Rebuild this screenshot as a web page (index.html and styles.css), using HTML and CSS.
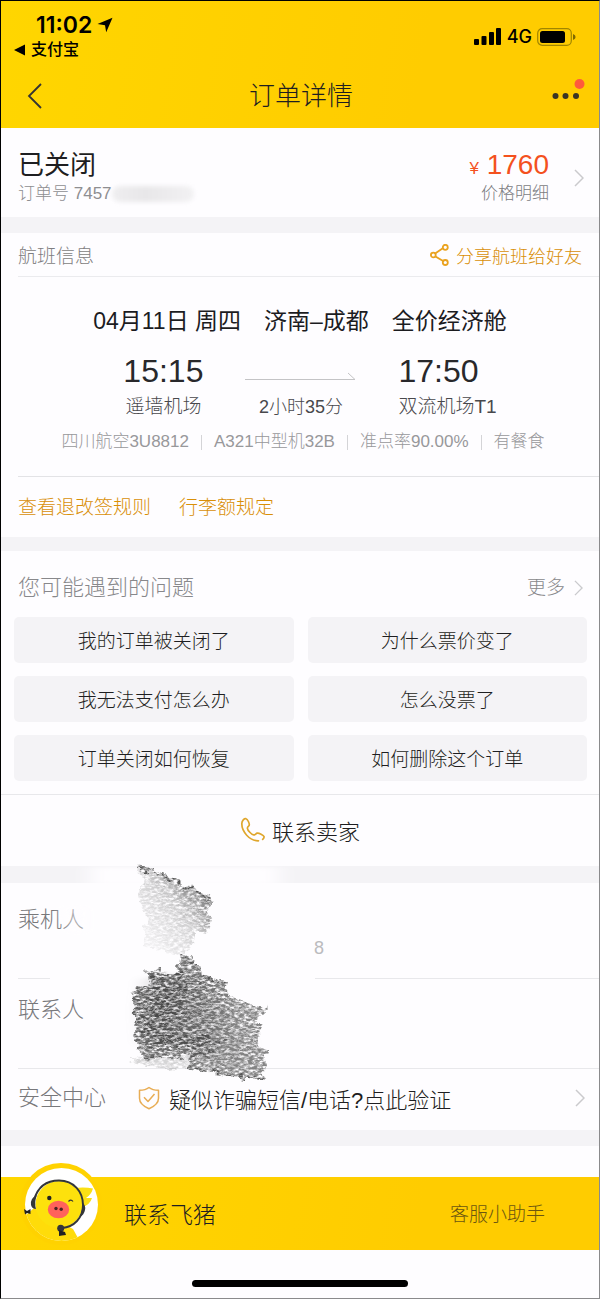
FILE: index.html
```html
<!DOCTYPE html>
<html lang="zh-CN">
<head>
<meta charset="utf-8">
<meta name="viewport" content="width=device-width, initial-scale=1">
<title>订单详情</title>
<link rel="stylesheet" href="styles.css">
</head>
<body>
<div class="screen">
  <header class="header">
    <div class="status">
      <div class="status-left">
        <div class="clock">11:02
          <svg width="16" height="16" viewBox="0 0 16 16" aria-hidden="true"><path d="M15.500 .8 9.200 15.200 8 8.200 .5 6.900Z" fill="#000"/></svg>
        </div>
        <a class="return" href="#">
          <svg width="11" height="12" viewBox="0 0 11 12" aria-hidden="true"><path d="M0 6 11 .5v11Z" fill="#000"/></svg>
          支付宝
        </a>
      </div>
      <div class="status-right">
        <svg width="28" height="18" viewBox="0 0 28 18" aria-hidden="true"><rect x="0" y="11" width="5" height="6" rx="1"/><rect x="7.500" y="8" width="5" height="9" rx="1"/><rect x="15" y="4" width="5" height="13" rx="1"/><rect x="22" y="0" width="5" height="17" rx="1"/></svg>
        <span>4G</span>
        <svg width="39" height="18" viewBox="0 0 39 18" aria-hidden="true"><rect x=".7" y=".7" width="33.600" height="16.600" rx="4.500" fill="none" stroke="#a08500" stroke-width="1.200"/><rect x="3" y="3" width="25" height="12" rx="2.500"/><path d="M36 6q2.600 1 2.600 3t-2.600 3Z" fill="#806a00"/></svg>
      </div>
    </div>
    <nav class="nav">
      <button class="icon-btn" aria-label="返回"><svg width="16" height="26" viewBox="0 0 16 26"><path d="M14 1 2 13l12 12" fill="none" stroke="#333" stroke-width="1.800"/></svg></button>
      <h1>订单详情</h1>
      <button class="icon-btn more-btn" aria-label="更多操作"><svg width="34" height="26" viewBox="0 0 34 26"><circle cx="4.500" cy="18" r="3" fill="#3a3524"/><circle cx="14.500" cy="18" r="3" fill="#3a3524"/><circle cx="25" cy="18" r="3" fill="#3a3524"/><circle cx="28.500" cy="6" r="5" fill="#ff5a3c"/></svg></button>
    </nav>
  </header>

  <main>
    <section class="order">
      <div>
        <h2>已关闭</h2>
        <p class="order-no">订单号 7457<span class="masked"></span></p>
      </div>
      <a class="price" href="#">
        <span class="price-text"><span class="amount"><small>¥</small> 1760</span><span class="price-label">价格明细</span></span>
        <svg class="chevron" width="10" height="18" viewBox="0 0 10 18" aria-hidden="true"><path d="m1 1 8 8-8 8"/></svg>
      </a>
    </section>

    <section class="card flight">
      <div class="flight-head">
        <h3>航班信息</h3>
        <a href="#" class="share">
          <svg width="20" height="22" viewBox="0 0 20 22" fill="none" stroke="#eaa320" stroke-width="1.800" aria-hidden="true"><path d="M12.800 4.200 5.500 9.200M5.500 12.500l7.600 4.600"/><circle cx="15.300" cy="3.300" r="2.500"/><circle cx="3.300" cy="11" r="2.400"/><circle cx="15.300" cy="18.500" r="2.500"/></svg>
          分享航班给好友
        </a>
      </div>
      <div class="flight-body">
        <div class="route"><span>04月11日 周四</span><span>济南–成都</span><span>全价经济舱</span></div>
        <div class="legs">
          <div class="leg"><time>15:15</time><span>遥墙机场</span></div>
          <div class="leg duration">
            <svg viewBox="0 0 111 36" width="111" height="36" fill="none" stroke="#c4c4c6" aria-hidden="true"><path d="M0 26.500h110L103 20"/></svg>
            <span>2小时35分</span>
          </div>
          <div class="leg arrive"><time>17:50</time><span>双流机场T1</span></div>
        </div>
        <ul class="facts"><li>四川航空3U8812</li><li>A321中型机32B</li><li>准点率90.00%</li><li>有餐食</li></ul>
      </div>
      <div class="rules"><a href="#">查看退改签规则</a><a href="#">行李额规定</a></div>
    </section>

    <section class="card questions">
      <div class="faq-head">
        <h3>您可能遇到的问题</h3>
        <a href="#">更多 <svg class="chevron" width="9" height="16" viewBox="0 0 10 18" aria-hidden="true"><path d="m1 1 8 8-8 8"/></svg></a>
      </div>
      <div class="faq">
        <button>我的订单被关闭了</button><button>为什么票价变了</button>
        <button>我无法支付怎么办</button><button>怎么没票了</button>
        <button>订单关闭如何恢复</button><button>如何删除这个订单</button>
      </div>
      <button class="seller">
        <svg width="26" height="26" viewBox="0 0 26 26" fill="none" stroke="#dfa62c" stroke-width="1.700" stroke-linecap="round" stroke-linejoin="round" aria-hidden="true"><path d="M18.500 23.800C9.500 24 1.600 14.500 1.800 6.500 1.900 3.500 4.200 1.400 6 1.700 7.600 2.100 9.700 6.600 9.200 8.200 8.800 9.500 7.300 9.700 7.400 11.300 7.600 13.400 11.500 17.500 13.600 17.900 15.200 18.100 15.800 16.500 17.200 16.200 18.900 15.900 23.500 18.100 24 19.600 24.300 20.500 23.600 21.600 22.700 22.400"/></svg>
        联系卖家
      </button>
    </section>

    <section class="card people">
      <div class="person passenger"><span class="label">乘机人</span><span class="id-tail">8</span></div>
      <div class="person"><span class="label">联系人</span></div>
      <a class="safety" href="#">
        <span class="label">安全中心</span>
        <svg width="22" height="24" viewBox="0 0 22 24" fill="none" stroke="#e8ad55" stroke-width="1.500" stroke-linejoin="round" aria-hidden="true"><path d="M11 1.500C8.500 3.500 5 4.200 1.500 4.200v8c0 5 4.500 8.300 9.500 10.500 5-2.200 9.500-5.500 9.500-10.500v-8C17 4.200 13.500 3.500 11 1.500Z"/><path d="m6 11.200 4 4.200 6.500-7.500"/></svg>
        <span class="tip">疑似诈骗短信/电话?点此验证</span>
        <svg class="chevron" width="10" height="18" viewBox="0 0 10 18" aria-hidden="true"><path d="m1 1 8 8-8 8"/></svg>
      </a>
      <svg class="scribble" width="290" height="226" viewBox="50 860 290 226" aria-hidden="true">
        <defs>
          <filter id="soft" x="-30%" y="-50%" width="160%" height="200%"><feGaussianBlur stdDeviation="9 2"/></filter>
          <filter id="pencil" x="-5%" y="-5%" width="110%" height="110%">
            <feTurbulence type="fractalNoise" baseFrequency=".09 .13" numOctaves="3" seed="3" result="wave"/>
            <feDisplacementMap in="SourceGraphic" in2="wave" scale="12" xChannelSelector="R" yChannelSelector="G" result="shape"/>
            <feTurbulence type="fractalNoise" baseFrequency=".213 .437" numOctaves="4" seed="21"/>
            <feColorMatrix values="0 0 0 0 0  0 0 0 0 0  0 0 0 0 0  2.200 1.600 0 0 -1.250" result="grain"/>
            <feComposite in="shape" in2="grain" operator="in" result="marks"/>
            <feGaussianBlur in="marks" stdDeviation=".45"/>
          </filter>
          <linearGradient id="fade" x1="145" y1="935" x2="200" y2="885" gradientUnits="userSpaceOnUse"><stop offset="0" stop-color="#999" stop-opacity=".15"/><stop offset=".55" stop-color="#888" stop-opacity=".4"/><stop offset="1" stop-color="#555" stop-opacity=".85"/></linearGradient>
          <radialGradient id="dark" cx="163" cy="1010" r="75" gradientUnits="userSpaceOnUse"><stop offset="0" stop-color="#4a4a4a"/><stop offset=".5" stop-color="#606060" stop-opacity=".95"/><stop offset="1" stop-color="#707070" stop-opacity=".85"/></radialGradient>
        </defs>
        <path d="M90 866h190v18H90Z" fill="#fefdff" filter="url(#soft)"/>
        <path d="M62 905h25v28H70Z" fill="#fefdff" opacity=".5" filter="url(#soft)"/>
        <path d="M50 974h265v8H50Z" fill="#fefdff"/>
        <path d="M146 978 180 972 200 984 225 1010 245 1040 245 1066 205 1060 200 1046 145 1044 142 1010Z" fill="#777" opacity=".2" filter="url(#soft)"/>
        <g filter="url(#pencil)">
          <path d="M139 865 213 896 207 908 211 916 208 932 193 930 192 944 180 955 143 945 148 915 136 896 144 880Z" fill="url(#fade)"/>
          <path d="M140 866 212 897" stroke="#555" stroke-width="3"/>
          <path d="M180 952 186 953 212 977 228 980 226 992 240 999 268 1007 257 1018 264 1022 256 1045 266 1052 265 1079 188 1068 190 1051 143 1057 134 1038 135 1010 130 992 150 984 143 968 177 972Z" fill="url(#dark)"/>
          <path d="M148 980 185 972 153 990 196 985 151 1000 173 1000 150 1014 180 1013 140 1030 175 1032 150 1043 210 1035 176 1046 230 1040" fill="none" stroke="#444" stroke-width="5" opacity=".7"/>
          <path d="M181 953 212 979M145 1057 215 1050M188 1067 265 1078M155 980 228 980" fill="none" stroke="#555" stroke-width="3"/>
          <path d="M130 1060 190 1050 187 1068 145 1066Z" fill="#999" opacity=".4"/>
        </g>
      </svg>
    </section>
  </main>

  <footer class="footer">
    <a class="assistant" href="#">
      <svg class="avatar" width="82" height="82" viewBox="0 0 82 82" aria-hidden="true">
        <defs><clipPath id="disc"><circle cx="41.500" cy="41.500" r="36.500"/></clipPath></defs>
        <circle cx="41" cy="41" r="41" fill="#ffd200"/>
        <circle cx="41.500" cy="41.500" r="36.500" fill="#fff"/>
        <g clip-path="url(#disc)">
          <path d="M55 25Q65 24 73 25.500 71 32 66 35h6Q70 42 62 44Z" fill="#fbe014"/>
          <path d="M14 45 5 53V82H60L58 75 53 66Z" fill="#ffdc0a"/>
          <circle cx="39" cy="41.500" r="23.500" fill="#fde10c"/>
        </g>
        <path d="M14 37C18 23 28 17.500 39 17.500 54 17.500 63 29 63 42 63 55 54 64 42 65" fill="none" stroke="#33363a" stroke-width="1.900"/>
        <path d="M17 32Q10 35 11 42 12 46 16 46Q14 39 17 32ZM62 39Q66 42 65 47 64 52 60 54Q63 46 62 39Z" fill="#33363a"/>
        <ellipse cx="38.500" cy="46.500" rx="10.700" ry="8.700" fill="#ff625b"/>
        <circle cx="36" cy="45.500" r="1.700" fill="#4a2322"/><circle cx="41.200" cy="46.300" r="1.700" fill="#4a2322"/>
        <circle cx="29.300" cy="35" r="2.200" fill="#222"/>
        <path d="M48.500 38.500q2.500-2.600 4.500 0" fill="none" stroke="#333" stroke-width="1.200"/>
        <circle cx="40.700" cy="65.300" r="3.500" fill="#33363a"/>
        <path d="M4 46l3 2 3.500-2v5l-3.500-1-2 1.500ZM39 67l6 2 1 3-4 .5-3 .5Z" fill="#222"/>
      </svg>
      <span class="assistant-name">联系飞猪</span>
      <span class="assistant-role">客服小助手</span>
    </a>
    <div class="home"><span></span></div>
  </footer>
</div>
</body>
</html>
```
FILE: styles.css
```css
* { box-sizing: border-box; }
body, h1, h2, h3, p, ul { margin: 0; padding: 0; }
body {
  font-family: "Liberation Sans", "Noto Sans CJK SC", sans-serif;
  font-weight: 300;
  color: #1e1e21;
  background: #fefdff;
}
h1, h2, h3 { font-weight: 300; }
a { color: inherit; text-decoration: none; }
button { font: inherit; color: inherit; border: 0; padding: 0; background: none; }
svg { display: block; flex: none; }

.screen {
  border: 1px solid #8a8a8c;
  border-top-color: #000;
  border-left-color: #000;
}
.chevron { fill: none; stroke: #cacacd; stroke-width: 1.5; }

.header { background: linear-gradient(100deg, #ffd600, #ffcc00 70%); }
.status {
  display: flex;
  justify-content: space-between;
  padding: 11px 23px 0 13px;
  color: #000;
}
.clock {
  display: flex;
  align-items: center;
  gap: 5px;
  padding-left: 22px;
  font: 600 23px/26px Inter, sans-serif;
}
.return {
  display: flex;
  align-items: center;
  gap: 6px;
  font-size: 16px;
  font-weight: 500;
  line-height: 24px;
}
.status-right {
  display: flex;
  align-items: center;
  gap: 5px;
  font: 500 18px/24px Inter, sans-serif;
}
.nav {
  display: grid;
  grid-template-columns: 1fr auto 1fr;
  align-items: center;
  height: 66px;
  padding: 2px 14px 0 26px;
}
.nav h1 { font-size: 26px; line-height: 36px; padding-right: 10px; }
.icon-btn { justify-self: start; }
.more-btn { justify-self: end; padding-bottom: 10px; }

.order {
  display: flex;
  justify-content: space-between;
  padding: 21px 15px 11px 17px;
}
.order h2 { font-size: 26px; font-weight: 400; line-height: 32px; }
.order-no { display: flex; align-items: center; font-size: 17px; line-height: 25px; color: #8e8e91; }
.masked {
  width: 82px;
  height: 16px;
  border-radius: 8px;
  background: linear-gradient(90deg, #efeef0, #e8e7e9 40%, #f2f1f3);
  filter: blur(2px);
}
.price { display: flex; align-items: center; gap: 25px; }
.price-text { display: grid; justify-items: end; }
.amount { font-size: 28px; line-height: 32px; color: #f4511e; }
.amount small { font-size: 17px; line-height: 1; }
.price-label { font-size: 17px; line-height: 25px; color: #7c7c7f; }

.card { position: relative; border-top: 16px solid #f4f3f6; }
.questions { border-top-width: 14px; }
.people { border-top-width: 17px; }

.flight-head {
  display: flex;
  justify-content: space-between;
  align-items: center;
  height: 44px;
  margin-left: 17px;
  padding-right: 17px;
  border-bottom: 1px solid #ebebee;
}
.flight-head h3 { font-size: 19px; color: #7e7e81; }
.share { display: flex; align-items: center; gap: 6px; font-size: 18px; color: #d98f08; }
.flight-body {
  display: grid;
  justify-content: center;
  margin-left: 17px;
  padding: 28px 17px 22px 0;
  border-bottom: 1px solid #e3e3e6;
}
.route {
  display: flex;
  justify-content: center;
  gap: 23px;
  font-size: 23px;
  font-weight: 400;
  line-height: 32px;
  color: #1c1c1f;
}
.legs {
  display: flex;
  justify-content: center;
  gap: 42px;
  padding: 16px 0 11px 20px;
}
.leg { display: grid; gap: 6px; justify-items: center; font-size: 19px; line-height: 24px; color: #48484c; }
.leg time { font-size: 32px; line-height: 36px; color: #28282b; }
.arrive { justify-items: start; }
.duration { font-size: 18px; }
.facts {
  display: flex;
  justify-content: center;
  align-items: center;
  padding-left: 6px;
  list-style: none;
  font-size: 17px;
  line-height: 24px;
  color: #98989b;
}
.facts li { display: flex; align-items: center; }
.facts li + li::before { content: ""; width: 1px; height: 15px; margin: 0 12px; background: #d4d4d7; }
.rules { display: flex; gap: 28px; padding: 17px 17px 15px; font-size: 19px; line-height: 28px; color: #d98f08; }

.faq-head {
  display: flex;
  justify-content: space-between;
  align-items: center;
  padding: 22px 16px 14px 17px;
  font-size: 22px;
  line-height: 30px;
  color: #88888b;
}
.faq-head h3 { font-size: 22px; }
.faq-head a { display: flex; align-items: center; gap: 9px; font-size: 19px; }
.faq { display: grid; grid-template-columns: 1fr 1fr; gap: 13px 14px; padding: 0 12px 13px 13px; }
.faq button { height: 46px; padding-bottom: 2px; border-radius: 5px; background: #f4f3f6; font-size: 19px; }
.seller {
  display: flex;
  justify-content: center;
  align-items: center;
  gap: 6px;
  width: 100%;
  height: 72px;
  padding-bottom: 2px;
  border-top: 1px solid #e8e8eb;
  font-size: 22px;
}

.label { flex: none; width: 120px; font-size: 22px; line-height: 30px; color: #78787b; }
.person { display: flex; height: 90px; margin-left: 17px; padding-top: 16px; border-bottom: 1px solid #e8e8eb; }
.passenger { height: 96px; padding-top: 22px; }
.id-tail { align-self: center; margin: 14px 0 0 176px; font-size: 18px; color: #bbbbbe; }
.safety { display: flex; align-items: center; height: 61px; padding: 0 14px 3px 17px; font-size: 22px; }
.tip { flex: 1; padding-left: 9px; }
.scribble { position: absolute; top: -22px; left: 49px; }

.footer { border-top: 16px solid #f4f3f6; padding-top: 31px; }
.assistant {
  position: relative;
  display: flex;
  justify-content: space-between;
  align-items: center;
  height: 73px;
  padding: 0 54px 2px 123px;
  background: linear-gradient(100deg, #ffd600, #ffcc00 70%);
}
.avatar { position: absolute; left: 19px; top: -14px; }
.assistant-name { font-size: 23px; }
.assistant-role { font-size: 19px; color: #6b5610; }
.home { display: flex; justify-content: center; padding: 30px 0 11px; }
.home span { width: 36%; height: 7px; border-radius: 4px; background: #000; }
```
